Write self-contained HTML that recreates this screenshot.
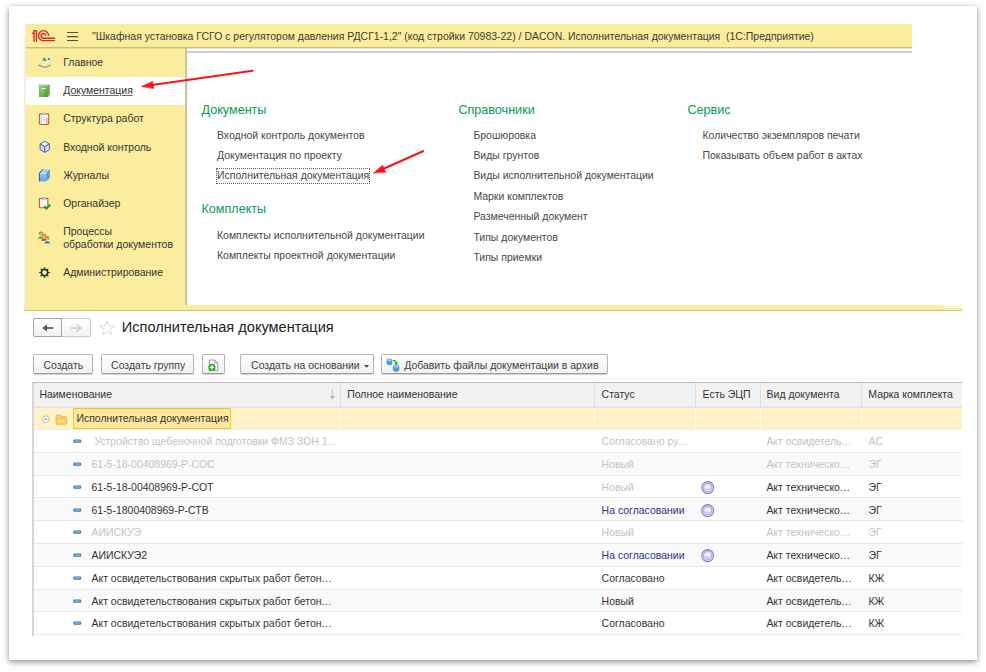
<!DOCTYPE html>
<html lang="ru">
<head>
<meta charset="utf-8">
<title>Исполнительная документация</title>
<style>
html,body{margin:0;padding:0;}
body{width:986px;height:672px;position:relative;overflow:hidden;background:#fff;font-family:"Liberation Sans",Arial,sans-serif;font-size:10.48px;color:#3f3f3f;}
.abs,.abs *{position:absolute;}
div,span{position:absolute;white-space:nowrap;line-height:1;}
#card{left:9px;top:6px;width:968px;height:654px;background:#fff;box-shadow:0 2px 6px rgba(0,0,0,.44),0 0 1.5px rgba(0,0,0,.1);}
/* top app */
#tbar{left:25.5px;top:24px;width:886.3px;height:23.2px;background:#fbed9e;}
#tline{left:25.5px;top:47.1px;width:886.3px;height:1.4px;background:#c9bd78;}
#tbar .t{left:66.5px;top:7.7px;font-size:10.48px;color:#3b3b30;white-space:pre;}
#side{left:26px;top:48.4px;width:159px;height:256.6px;background:#fbed9e;}
#side .it{left:37.2px;color:#333;font-size:10.48px;}
#sel{left:0;top:28.3px;width:159px;height:28.4px;background:#fff;}
#gline{left:187px;top:51.2px;width:725.1px;height:1.7px;background:#cdcdcd;}
#band{left:24.2px;top:304.6px;width:937.6px;height:5.3px;background:#fbed9e;border-bottom:.7px solid #cfc27c;}
#bandl{left:943px;top:304.6px;width:18.8px;height:3px;background:#fdf6d2;}
.h{font-size:12.6px;color:#0a9a50;}
.l{font-size:10.48px;color:#474747;}
/* list form */
.btn{height:19px;border:1px solid #b4b4b4;border-bottom-color:#9a9a9a;border-radius:2px;background:linear-gradient(#fff,#f1f1f1);box-shadow:0 1px 1px rgba(0,0,0,.18);box-sizing:border-box;top:354px;height:20px;}
.btn span{top:6px;color:#3c3c3c;font-size:10.48px;}
#tbl{left:31.8px;top:382px;width:930px;height:253.6px;border-top:1px solid #bdbdbd;border-left:2px solid #d6d6d6;box-sizing:border-box;}
.row{left:0;width:928px;height:22.76px;border-bottom:1px solid #e9e9e9;box-sizing:border-box;}
.row.alt{background:#fafafa;}
.row span{top:7.1px;font-size:10.48px;}
.vl{top:0;width:1px;background:#dedede;}
i{font-style:normal;letter-spacing:.55px;}
.g{color:#c3c3c3;}
.d{color:#333;}
.b{color:#30308a;}
</style>
</head>
<body>
<div id="card"></div>

<!-- title bar -->
<div id="tbar">
  <span class="t">"Шкафная установка ГСГО с регулятором давления РДСГ1-1,2" (код стройки 70983-22) / DACON. Исполнительная документация  (1С:Предприятие)</span>
</div>

<div id="tline"></div>
<div style="left:25px;top:24px;width:1px;height:281px;background:#f1ebc6"></div>
<div style="left:24px;top:36px;width:1px;height:269px;background:#f0f0f5"></div>
<!-- sidebar -->
<div id="side">
  <div id="sel"></div>
  <span class="it" style="top:9.9px">Главное</span>
  <span class="it" style="top:37.9px;text-decoration:underline;text-decoration-color:#6a6a6a;text-decoration-thickness:.9px">Документация</span>
  <span class="it" style="top:66.0px">Структура работ</span>
  <span class="it" style="top:94.2px">Входной контроль</span>
  <span class="it" style="top:122.3px">Журналы</span>
  <span class="it" style="top:150.6px">Органайзер</span>
  <span class="it" style="top:178.5px">Процессы</span>
  <span class="it" style="top:192px">обработки документов</span>
  <span class="it" style="top:219.6px">Администрирование</span>
</div>
<div style="left:185px;top:48.4px;width:1px;height:256.2px;background:#dacd83"></div><div style="left:186px;top:48.4px;width:1px;height:256.2px;background:#c3bd9c"></div>
<div id="gline"></div>
<div style="left:26px;top:48px;width:885.8px;height:1px;background:rgba(201,189,120,.42)"></div>
<div id="band"></div><div id="bandl"></div>

<!-- sidebar icons -->
<svg id="icons" style="position:absolute;left:0;top:0" width="986" height="672" viewBox="0 0 986 672">
  <!-- hamburger -->
  <path d="M67 32.5H78.1M67 36.6H78.1M67 40.5H78.1" stroke="#505044" stroke-width="1.1" fill="none"/>
  <!-- 1C logo -->
  <g fill="none" stroke="#da252d" stroke-width="1.4" stroke-linecap="round" stroke-linejoin="round">
    <path d="M32.5 33.3 H34 M34 41.2 V30.6 H36.4 V41.2"/>
    <path d="M48.5 35.4 A5 5 0 1 0 43.6 40.6 H54.5"/>
    <path d="M45.8 35.2 A2.4 2.4 0 1 0 43.6 38.3 H54.5"/>
  </g>
  <!-- Главное -->
  <defs>
    <linearGradient id="gbook" x1="0" y1="0" x2="1" y2="1"><stop offset="0" stop-color="#93d267"/><stop offset="1" stop-color="#479a2e"/></linearGradient>
    <linearGradient id="gjr" x1="0" y1="0" x2="0" y2="1"><stop offset="0" stop-color="#93c8f8"/><stop offset="1" stop-color="#5a9fe4"/></linearGradient>
    <radialGradient id="gdesk"><stop offset="0" stop-color="#fffdf4"/><stop offset=".4" stop-color="#f3e6c0"/><stop offset="1" stop-color="#dfc48c"/></radialGradient>
  </defs>
  <g>
    <path d="M38.1 64.5 L43.6 62.4 L51 64.4 L45.2 66.7Z" fill="url(#gdesk)"/>
    <path d="M38.1 64.5 L45.2 66.7 L51 64.4 L51 65.7 L45.2 68.1 L38.1 65.9Z" fill="#c6965f"/>
    <path d="M42.1 60.6 L46.6 60.8 L47.6 63.6 L40.8 63.6Z" fill="#fdf8a8" opacity=".75"/>
    <path d="M44.2 56.9 L46.7 60.9 L42 60.7Z" fill="#2f7cc4"/>
    <path d="M44.2 56.9 L43.6 60.8 L42 60.7Z" fill="#8fc6ea"/>
    <rect x="47.9" y="59.6" width="2" height="3.8" fill="#f0ead4"/>
    <rect x="47.8" y="57.9" width="2.2" height="2" rx=".4" fill="#3f8bcb"/>
  </g>
  <!-- Документация -->
  <g>
    <path d="M40.4 84.3 H49.7 V94.8 L48.1 97 H40.4Z" fill="#b9cdb4"/>
    <path d="M48.1 85.7 L49.7 84.5 V94.8 L48.1 97Z" fill="#6da85c"/>
    <rect x="38.9" y="85.7" width="9.2" height="11.3" rx=".6" fill="url(#gbook)"/>
    <path d="M38.9 86 Q38.9 84.6 40.4 84.4" fill="none" stroke="#5b7fb0" stroke-width=".6"/>
    <rect x="41.6" y="87.9" width="4.1" height="1.1" fill="#f2fbe9"/>
    <rect x="40.5" y="89.9" width="1.7" height=".9" fill="#2f6f22"/>
    <rect x="40.5" y="92.1" width="1.7" height=".9" fill="#2f6f22"/>
    <rect x="40.3" y="89.4" width="3" height="4.2" fill="#dff2d2" opacity=".35"/>
  </g>
  <!-- Структура работ -->
  <g>
    <rect x="39.4" y="113.9" width="9.3" height="10.6" rx=".9" fill="#fbfbfd" stroke="#b9651f" stroke-width="1.1"/>
    <path d="M41.4 115.2 Q41.6 112.6 44 112.6 Q46.4 112.6 46.6 115.2Z" fill="#b9bcc6"/>
    <rect x="40.5" y="115.8" width="1.3" height="8" fill="#a9d4f4"/>
    <rect x="46.1" y="118" width="1.5" height="5.8" fill="#f79a8a"/>
    <path d="M43.2 117.4h1.8M43.2 119.6h1.8M43.6 121.6h1.4" stroke="#b5b5b8" stroke-width=".8"/>
  </g>
  <!-- Входной контроль -->
  <g stroke="#506a9a" stroke-width="1" stroke-linejoin="round">
    <path d="M44.7 141.2 L49.4 143.9 L44.7 146.8 L40.1 143.9Z" fill="#e6eef9"/>
    <path d="M40.1 143.9 L44.7 146.8 V152.4 L40.1 149.6Z" fill="#cfdcef"/>
    <path d="M49.4 143.9 L44.7 146.8 V152.4 L49.4 149.6Z" fill="#d6e2f2"/>
  </g>
  <!-- Журналы -->
  <g>
    <path d="M39.4 173.3 L42.7 169.2 H49.7 L46.3 173.3Z" fill="#a9cff5"/>
    <path d="M46.3 173.3 L49.7 169.2 V177.8 L46.3 181.4Z" fill="#4a90da"/>
    <path d="M48 171.3 V179.6" stroke="#6aa9e8" stroke-width=".6"/>
    <rect x="39.4" y="173.3" width="6.9" height="8.1" fill="url(#gjr)"/>
    <path d="M39.4 173.4 H46.3" stroke="#d4e9fb" stroke-width=".7"/>
    <path d="M39.4 173.3 V181.4 M39.4 173.3 L42.7 169.2" stroke="#2a3444" stroke-width=".8" fill="none"/>
  </g>
  <!-- Органайзер -->
  <g>
    <rect x="39.4" y="198.4" width="8.5" height="9.4" rx=".9" fill="#f4f5f8" stroke="#ba632a" stroke-width="1.1"/>
    <path d="M41 199.7 Q41.2 197 43.6 197 Q46 197 46.2 199.7Z" fill="#b3b6c0"/>
    <path d="M44.2 206.2 L46.5 208.6 L50.2 204.8" fill="none" stroke="#1f9a1f" stroke-width="2.1"/>
  </g>
  <!-- Процессы -->
  <g>
    <path d="M38.1 238.8 Q38.1 236.4 40.6 236.4 Q43 236.4 43 238.8Z" fill="#3fae4a"/>
    <circle cx="40.9" cy="233.6" r="2.1" fill="#a6844c"/><circle cx="41" cy="234.2" r="1.4" fill="#f2b264"/>
    <path d="M41.2 240.8 Q41.2 238.6 43.7 238.6 Q46.1 238.6 46.1 240.8Z" fill="#cc3344"/>
    <circle cx="44.2" cy="235.8" r="2.1" fill="#a6844c"/><circle cx="44.3" cy="236.4" r="1.4" fill="#f2b264"/>
    <path d="M44.5 243.4 Q44.5 240.9 47.3 240.9 Q50.1 240.9 50.1 243.4Z" fill="#2f86d6"/>
    <circle cx="47.3" cy="238.2" r="2.1" fill="#a6844c"/><circle cx="47.4" cy="238.8" r="1.4" fill="#f2b264"/>
  </g>
  <!-- Администрирование -->
  <g>
    <circle cx="44.5" cy="272.6" r="3.1" fill="none" stroke="#2f3541" stroke-width="1.4"/>
    <g fill="#2f3541">
      <path id="tooth" d="M43.3 270 L44 267.2 H45 L45.7 270Z"/>
      <use href="#tooth" transform="rotate(45 44.5 272.6)"/>
      <use href="#tooth" transform="rotate(90 44.5 272.6)"/>
      <use href="#tooth" transform="rotate(135 44.5 272.6)"/>
      <use href="#tooth" transform="rotate(180 44.5 272.6)"/>
      <use href="#tooth" transform="rotate(225 44.5 272.6)"/>
      <use href="#tooth" transform="rotate(270 44.5 272.6)"/>
      <use href="#tooth" transform="rotate(315 44.5 272.6)"/>
    </g>
  </g>

  <!-- red arrows -->
  <g stroke="#f5141c" stroke-width="2.1" stroke-linecap="round" fill="#f5141c">
    <path d="M252.6 70.7 L152 85"/>
    <path d="M141.6 86.4 L152.6 81.4 L153.6 88.3Z" stroke-width=".6" stroke-linejoin="round"/>
    <path d="M423 151.2 L383 169"/>
    <path d="M373.6 173 L382.6 165.2 L385.6 172Z" stroke-width=".6" stroke-linejoin="round"/>
  </g>
</svg>

<!-- section content -->
<span class="h" style="left:201.5px;top:103.5px">Документы</span>
<span class="l" style="left:217px;top:130.6px">Входной контроль документов</span>
<span class="l" style="left:217px;top:151px">Документация по проекту</span>
<div style="left:216.2px;top:167.8px;width:153.8px;height:16.4px;border:1px dotted #5e5e5e;box-sizing:border-box"></div>
<span class="l" style="left:217px;top:171px">Исполнительная документация</span>
<span class="h" style="left:201.5px;top:203.3px">Комплекты</span>
<span class="l" style="left:217px;top:230.5px">Комплекты исполнительной документации</span>
<span class="l" style="left:217px;top:250.7px">Комплекты проектной документации</span>

<span class="h" style="left:458.4px;top:103.5px">Справочники</span>
<span class="l" style="left:473.4px;top:130.6px">Брошюровка</span>
<span class="l" style="left:473.4px;top:151px">Виды грунтов</span>
<span class="l" style="left:473.4px;top:171px">Виды исполнительной документации</span>
<span class="l" style="left:473.4px;top:192px">Марки комплектов</span>
<span class="l" style="left:473.4px;top:212.4px">Размеченный документ</span>
<span class="l" style="left:473.4px;top:233px">Типы документов</span>
<span class="l" style="left:473.4px;top:253.2px">Типы приемки</span>

<span class="h" style="left:687.5px;top:103.5px">Сервис</span>
<span class="l" style="left:702.5px;top:130.6px">Количество экземпляров печати</span>
<span class="l" style="left:702.5px;top:151px">Показывать объем работ в актах</span>

<!-- list form header -->
<div style="left:32.8px;top:318.3px;width:58px;height:18.6px;border:1px solid #c9c9c9;border-radius:2px;box-sizing:border-box;background:linear-gradient(#fff,#f3f3f3)"></div>
<div style="left:32.8px;top:318.3px;width:29.6px;height:18.6px;border:1px solid #a3a3a3;border-radius:2px 0 0 2px;box-sizing:border-box;background:linear-gradient(#fff,#f0f0f0)"></div>
<svg style="position:absolute;left:32px;top:318px" width="90" height="20" viewBox="0 0 90 20">
  <path d="M21.2 10 H12.4" stroke="#555" stroke-width="1.7" fill="none"/>
  <path d="M10.2 10 L15 6.4 L15 13.6Z" fill="#555"/>
  <path d="M38.4 10 H46.6" stroke="#c4c4c4" stroke-width="1.3" fill="none"/>
  <path d="M44.6 6.6 L48.6 10 L44.6 13.4" stroke="#c4c4c4" stroke-width="1.3" fill="none"/>
  <path d="M75 2.8 L76.9 7.9 L82.3 8.1 L78 11.4 L79.5 16.6 L75 13.6 L70.5 16.6 L72 11.4 L67.7 8.1 L73.1 7.9Z" fill="none" stroke="#d6d6d6" stroke-width=".9" stroke-linejoin="round"/>
</svg>
<span style="left:121.8px;top:320px;font-size:14.58px;color:#222">Исполнительная документация</span>

<!-- buttons -->
<div class="btn" style="left:32.8px;width:60.2px"><span style="left:9.6px">Создать</span></div>
<div class="btn" style="left:100.5px;width:93.4px"><span style="left:9.6px">Создать группу</span></div>
<div class="btn" style="left:201.5px;width:23px">
  <svg style="position:absolute;left:0;top:0" width="23" height="20" viewBox="0 0 23 20">
    <path d="M7.4 4.8 H12.8 L15.8 7.8 V15.4 H7.4Z" fill="#fdfdfd" stroke="#8b93a3" stroke-width=".9" transform="translate(-1,.2)"/>
    <path d="M12.8 4.8 V7.8 H15.8" fill="none" stroke="#8b93a3" stroke-width=".8" transform="translate(-1,.2)"/>
    <circle cx="8.9" cy="12.4" r="3.6" fill="#2fa534"/>
    <path d="M8.9 10.2 V14.6 M6.7 12.4 H11.1" stroke="#fff" stroke-width="1.4"/>
  </svg>
</div>
<div class="btn" style="left:240.3px;width:133.4px"><span style="left:9.8px">Создать на основании</span>
  <svg style="position:absolute;left:123px;top:9.6px" width="6" height="4" viewBox="0 0 6 4"><path d="M0 0H5L2.5 2.8Z" fill="#444"/></svg>
</div>
<div class="btn" style="left:381.2px;width:227px"><span style="left:22px">Добавить файлы документации в архив</span>
  <svg style="position:absolute;left:3.6px;top:2.6px" width="16" height="16" viewBox="0 0 16 16">
    <rect x="1" y="1" width="5" height="5.8" rx="1.6" fill="#4c9be0" stroke="#2c78c2" stroke-width=".6"/>
    <rect x="7.3" y="7.2" width="5.6" height="6" rx="1.7" fill="#4c9be0" stroke="#2c78c2" stroke-width=".6"/>
    <ellipse cx="3.5" cy="2.2" rx="2.1" ry="1" fill="#a9d3f5"/>
    <ellipse cx="10.1" cy="8.5" rx="2.4" ry="1.05" fill="#a9d3f5"/>
    <path d="M7 2.4 Q10.4 2.4 10.2 5.4" fill="none" stroke="#2ea02e" stroke-width="1.3"/>
    <path d="M8 4.6 H12.4 L10.2 7.2Z" fill="#2ea02e"/>
  </svg>
</div>

<!-- table -->
<div id="tbl">
  <div style="left:0;top:0;width:928px;height:24.8px;background:#f2f2f2;border-bottom:2px solid #e4e4e4;box-sizing:border-box">
    <span style="left:5.6px;top:7.2px;color:#333">Наименование</span>
    <svg style="position:absolute;left:295px;top:5px" width="8" height="12" viewBox="0 0 8 12"><path d="M3.4 1 V9.6" stroke="#cbc5c5" stroke-width="1.1"/><path d="M1.6 8 L3.4 10.2 L5.2 8" fill="none" stroke="#7a7f8c" stroke-width="1"/></svg>
    <span style="left:313.4px;top:7.2px;color:#333">Полное наименование</span>
    <span style="left:567.8px;top:7.2px;color:#333">Статус</span>
    <span style="left:668.8px;top:7.2px;color:#333">Есть ЭЦП</span>
    <span style="left:732.8px;top:7.2px;color:#333">Вид документа</span>
    <span style="left:834.5px;top:7.2px;color:#333">Марка комплекта</span>
  </div>
  <div class="row" style="top:25px;height:22.2px;background:#fff2c6;border-bottom-color:#ececec">
    <div style="left:39.2px;top:.4px;width:158px;height:20.6px;background:#ffe9a0;border:1.2px solid #f7c425;box-sizing:border-box;border-radius:1px"></div>
    <span class="d" style="left:42.6px;top:6.4px">Исполнительная документация</span>
    <svg style="position:absolute;left:7px;top:5px" width="30" height="14" viewBox="0 0 30 14">
      <circle cx="4.7" cy="6.2" r="3.4" fill="#fff" stroke="#b4b4b4" stroke-width=".9"/>
      <path d="M2.9 6.2H6.5" stroke="#8a8a8a" stroke-width="1"/>
      <path d="M15 3.4 Q15 2.2 16.2 2.2 H19.4 L20.6 3.6 H24.6 Q25.6 3.6 25.6 4.6 V10.2 Q25.6 11.2 24.6 11.2 H16 Q15 11.2 15 10.2Z" fill="#f8d774" stroke="#e2ad3a" stroke-width=".8"/>
      <path d="M15 5.6 H25.6" stroke="#e9bb4c" stroke-width=".7"/>
    </svg>
  </div>
<!--ROWS-->
  <div class="row" style="top:47.2px"><svg style="position:absolute;left:39.1px;top:9.2px" width="9" height="5" viewBox="0 0 9 5"><rect x=".2" y=".5" width="8" height="3.3" rx="1.2" fill="#3f7ab0"/><rect x="1.5" y="1.4" width="5.4" height="1.2" fill="#9cbfde"/></svg><span class="g" style="left:57.7px"> Устройство щебеночной подготовки ФМЗ ЗОН 1...</span><span class="g" style="left:567.8px">Согласовано ру<i>...</i></span><span class="g" style="left:732.6px">Акт освидетель<i>...</i></span><span class="g" style="left:834.6px">АС</span></div>
  <div class="row alt" style="top:70.0px"><svg style="position:absolute;left:39.1px;top:9.2px" width="9" height="5" viewBox="0 0 9 5"><rect x=".2" y=".5" width="8" height="3.3" rx="1.2" fill="#3f7ab0"/><rect x="1.5" y="1.4" width="5.4" height="1.2" fill="#9cbfde"/></svg><span class="g" style="left:57.7px">61-5-18-00408969-Р-СОС</span><span class="g" style="left:567.8px">Новый</span><span class="g" style="left:732.6px">Акт техническо<i>...</i></span><span class="g" style="left:834.6px">ЭГ</span></div>
  <div class="row" style="top:92.7px"><svg style="position:absolute;left:39.1px;top:9.2px" width="9" height="5" viewBox="0 0 9 5"><rect x=".2" y=".5" width="8" height="3.3" rx="1.2" fill="#3f7ab0"/><rect x="1.5" y="1.4" width="5.4" height="1.2" fill="#9cbfde"/></svg><span class="d" style="left:57.7px">61-5-18-00408969-Р-СОТ</span><span class="g" style="left:567.8px">Новый</span><svg style="position:absolute;left:666px;top:5px" width="15" height="15" viewBox="0 0 15 15"><circle cx="7.7" cy="6.6" r="6" fill="#d9d7f2" stroke="#8480c6" stroke-width="1.05"/><circle cx="7.7" cy="6.6" r="4.1" fill="#e6e5f7" stroke="#9995d4" stroke-width=".8"/><path d="M5.5 5.7h4.4" stroke="#fff" stroke-width="1.4"/><path d="M5.4 8 q2.3 1.7 4.6 0" stroke="#aeabde" stroke-width=".8" fill="none"/></svg><span class="d" style="left:732.6px">Акт техническо<i>...</i></span><span class="d" style="left:834.6px">ЭГ</span></div>
  <div class="row alt" style="top:115.5px"><svg style="position:absolute;left:39.1px;top:9.2px" width="9" height="5" viewBox="0 0 9 5"><rect x=".2" y=".5" width="8" height="3.3" rx="1.2" fill="#3f7ab0"/><rect x="1.5" y="1.4" width="5.4" height="1.2" fill="#9cbfde"/></svg><span class="d" style="left:57.7px">61-5-1800408969-Р-СТВ</span><span class="b" style="left:567.8px">На согласовании</span><svg style="position:absolute;left:666px;top:5px" width="15" height="15" viewBox="0 0 15 15"><circle cx="7.7" cy="6.6" r="6" fill="#d9d7f2" stroke="#8480c6" stroke-width="1.05"/><circle cx="7.7" cy="6.6" r="4.1" fill="#e6e5f7" stroke="#9995d4" stroke-width=".8"/><path d="M5.5 5.7h4.4" stroke="#fff" stroke-width="1.4"/><path d="M5.4 8 q2.3 1.7 4.6 0" stroke="#aeabde" stroke-width=".8" fill="none"/></svg><span class="d" style="left:732.6px">Акт техническо<i>...</i></span><span class="d" style="left:834.6px">ЭГ</span></div>
  <div class="row" style="top:138.2px"><svg style="position:absolute;left:39.1px;top:9.2px" width="9" height="5" viewBox="0 0 9 5"><rect x=".2" y=".5" width="8" height="3.3" rx="1.2" fill="#3f7ab0"/><rect x="1.5" y="1.4" width="5.4" height="1.2" fill="#9cbfde"/></svg><span class="g" style="left:57.7px">АИИСКУЭ</span><span class="g" style="left:567.8px">Новый</span><span class="g" style="left:732.6px">Акт техническо<i>...</i></span><span class="g" style="left:834.6px">ЭГ</span></div>
  <div class="row alt" style="top:161.0px"><svg style="position:absolute;left:39.1px;top:9.2px" width="9" height="5" viewBox="0 0 9 5"><rect x=".2" y=".5" width="8" height="3.3" rx="1.2" fill="#3f7ab0"/><rect x="1.5" y="1.4" width="5.4" height="1.2" fill="#9cbfde"/></svg><span class="d" style="left:57.7px">АИИСКУЭ2</span><span class="b" style="left:567.8px">На согласовании</span><svg style="position:absolute;left:666px;top:5px" width="15" height="15" viewBox="0 0 15 15"><circle cx="7.7" cy="6.6" r="6" fill="#d9d7f2" stroke="#8480c6" stroke-width="1.05"/><circle cx="7.7" cy="6.6" r="4.1" fill="#e6e5f7" stroke="#9995d4" stroke-width=".8"/><path d="M5.5 5.7h4.4" stroke="#fff" stroke-width="1.4"/><path d="M5.4 8 q2.3 1.7 4.6 0" stroke="#aeabde" stroke-width=".8" fill="none"/></svg><span class="d" style="left:732.6px">Акт техническо<i>...</i></span><span class="d" style="left:834.6px">ЭГ</span></div>
  <div class="row" style="top:183.8px"><svg style="position:absolute;left:39.1px;top:9.2px" width="9" height="5" viewBox="0 0 9 5"><rect x=".2" y=".5" width="8" height="3.3" rx="1.2" fill="#3f7ab0"/><rect x="1.5" y="1.4" width="5.4" height="1.2" fill="#9cbfde"/></svg><span class="d" style="left:57.7px">Акт освидетельствования скрытых работ бетон<i>...</i></span><span class="d" style="left:567.8px">Согласовано</span><span class="d" style="left:732.6px">Акт освидетель<i>...</i></span><span class="d" style="left:834.6px">КЖ</span></div>
  <div class="row alt" style="top:206.5px"><svg style="position:absolute;left:39.1px;top:9.2px" width="9" height="5" viewBox="0 0 9 5"><rect x=".2" y=".5" width="8" height="3.3" rx="1.2" fill="#3f7ab0"/><rect x="1.5" y="1.4" width="5.4" height="1.2" fill="#9cbfde"/></svg><span class="d" style="left:57.7px">Акт освидетельствования скрытых работ бетон<i>...</i></span><span class="d" style="left:567.8px">Новый</span><span class="d" style="left:732.6px">Акт освидетель<i>...</i></span><span class="d" style="left:834.6px">КЖ</span></div>
  <div class="row" style="top:229.3px"><svg style="position:absolute;left:39.1px;top:9.2px" width="9" height="5" viewBox="0 0 9 5"><rect x=".2" y=".5" width="8" height="3.3" rx="1.2" fill="#3f7ab0"/><rect x="1.5" y="1.4" width="5.4" height="1.2" fill="#9cbfde"/></svg><span class="d" style="left:57.7px">Акт освидетельствования скрытых работ бетон<i>...</i></span><span class="d" style="left:567.8px">Согласовано</span><span class="d" style="left:732.6px">Акт освидетель<i>...</i></span><span class="d" style="left:834.6px">КЖ</span></div>
  <div class="vl" style="left:306.6px;height:23px"></div>
  <div class="vl" style="left:306.6px;top:25px;height:21.2px;background:#fffaf0"></div>
  <div class="vl" style="left:560.2px;height:23px"></div>
  <div class="vl" style="left:560.2px;top:25px;height:21.2px;background:#fffaf0"></div>
  <div class="vl" style="left:661.6px;height:23px"></div>
  <div class="vl" style="left:661.6px;top:25px;height:21.2px;background:#fffaf0"></div>
  <div class="vl" style="left:726px;height:23px"></div>
  <div class="vl" style="left:726px;top:25px;height:21.2px;background:#fffaf0"></div>
  <div class="vl" style="left:827.4px;height:23px"></div>
  <div class="vl" style="left:827.4px;top:25px;height:21.2px;background:#fffaf0"></div>
<!--/ROWS-->
</div>
</body>
</html>
